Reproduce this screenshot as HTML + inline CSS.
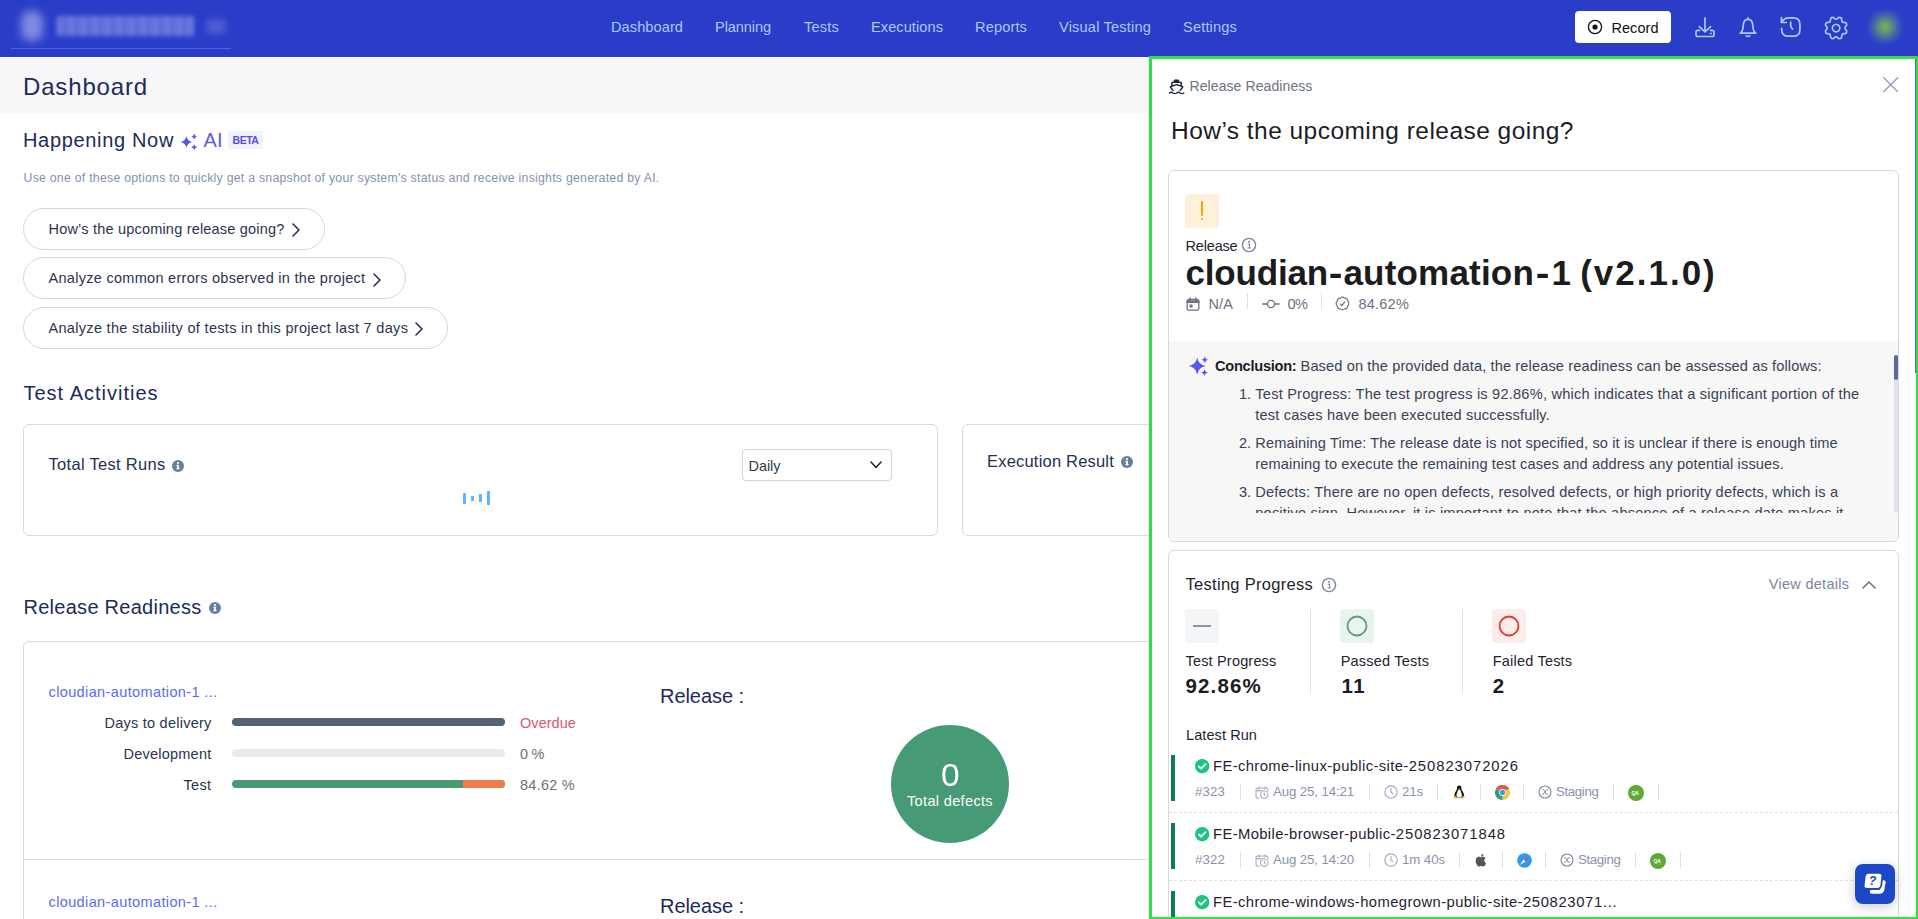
<!DOCTYPE html>
<html lang="en"><head>
<meta charset="utf-8">
<title>Dashboard</title>
<style>
*{box-sizing:border-box;margin:0;padding:0}
html,body{width:1918px;height:919px;overflow:hidden;background:#fff}
body{font-family:"Liberation Sans",sans-serif;color:#1d2a5b;position:relative;font-size:14px}
.abs{position:absolute}
.t{position:absolute;white-space:nowrap;line-height:20px;height:20px}
svg{position:absolute;overflow:visible}
/* header */
#hdr{position:absolute;left:0;top:0;width:1918px;height:57px;background:#2a3dc8}
#hdr .nav{color:#a9c9fa;font-size:14.600px}
#sub{position:absolute;left:0;top:57px;width:1918px;height:60px;background:#f7f7fa}
#main{position:absolute;left:0;top:113px;width:1160px;height:806px;background:#fff;border-top-left-radius:2px}
.h2{font-size:20px;color:#1d2a5b;line-height:28px;height:28px}
.pill{position:absolute;left:23px;height:42px;border:1px solid #d4d7df;border-radius:21px;background:#fff}
.card{position:absolute;border:1px solid #d6d9e3;border-radius:6px;background:#fff}
.lbl{font-size:14.5px;color:#2b3350}
.bar{position:absolute;left:232px;width:273px;height:8px;border-radius:4px;overflow:hidden}
/* panel */
#panel{position:absolute;left:1149px;top:56px;width:770px;height:864px;border:3px solid #33de42;background:#fff;overflow:hidden}
#pin{position:absolute;left:-1152px;top:-59px;width:1918px;height:919px}
.g{color:#6b7280}
.m{font-size:13.300px;color:#8b93a7}
.v{font-size:20.500px;font-weight:700;color:#1c1c1e;line-height:24px;height:24px}
.cl{position:absolute;white-space:nowrap;font-size:14.600px;line-height:21px;color:#3a4152}
.cl b{font-weight:700}
</style>
</head>
<body>
<div id="hdr">
  <!-- blurred project selector -->
  <div class="abs" style="left:21px;top:11px;width:22px;height:30px;border-radius:9px;background:#8e98e6;filter:blur(4px);opacity:.85"></div>
  <div class="abs" style="left:57px;top:15.500px;width:137px;height:20px;border-radius:3px;background:repeating-linear-gradient(90deg,#8d97ec 0 4px,#5865d6 4px 7px,#7b86e4 7px 10px,#4f5cd2 10px 12px);filter:blur(2.500px);opacity:.85"></div>
  <div class="abs" style="left:206px;top:19px;width:20px;height:15px;border-radius:4px;background:#5462d8;filter:blur(3px);opacity:.85"></div>
  <div class="abs" style="left:11px;top:47.500px;width:220px;height:1px;background:#5261d6"></div>
  <span class="t nav" style="left: 611px; top: 17px; letter-spacing: 0.07px;">Dashboard</span>
  <span class="t nav" style="left: 715px; top: 17px; letter-spacing: -0.1px;">Planning</span>
  <span class="t nav" style="left: 804px; top: 17px; letter-spacing: 0.19px;">Tests</span>
  <span class="t nav" style="left: 871px; top: 17px; letter-spacing: 0.06px;">Executions</span>
  <span class="t nav" style="left: 975px; top: 17px; letter-spacing: 0.13px;">Reports</span>
  <span class="t nav" style="left: 1059px; top: 17px; letter-spacing: 0.18px;">Visual Testing</span>
  <span class="t nav" style="left: 1183px; top: 17px; letter-spacing: 0.16px;">Settings</span>
  <div class="abs" style="left:1575px;top:11px;width:96px;height:32px;background:#fff;border-radius:4px"></div>
  <svg style="left:1587px;top:19px" width="16" height="16" viewBox="0 0 16 16"><circle cx="8" cy="8" r="6.6" fill="none" stroke="#111" stroke-width="1.3"></circle><circle cx="8" cy="8" r="2.600" fill="#111"></circle></svg>
  <span class="t" style="left: 1611.5px; top: 18px; color: rgb(17, 17, 17); font-size: 14.5px; letter-spacing: 0.04px;">Record</span>
  <!-- download -->
  <svg style="left:1695px;top:17px" width="20" height="21" viewBox="0 0 20 21" fill="none" stroke="#a8cbfa" stroke-width="1.700" stroke-linecap="round" stroke-linejoin="round"><path d="M10 .9v13.600M4.400 9.600l5.600 5.400 5.600-5.400"></path><path d="M4.500 13.300H2.700c-1 0-1.700.7-1.700 1.700v2.800c0 1 .7 1.700 1.700 1.700h14.600c1 0 1.700-.7 1.700-1.700V15c0-1-.7-1.700-1.700-1.700h-1.800"></path><path d="M15.300 16.400h1.100" stroke-width="1.500"></path></svg>
  <!-- bell -->
  <svg style="left:1738px;top:17px" width="20" height="21" viewBox="0 0 20 21" fill="none" stroke="#a8cbfa" stroke-width="1.700" stroke-linecap="round" stroke-linejoin="round"><path d="M10 2.300C7.400 2.300 5.700 4.300 5.400 7.200L4.700 12.300C4.500 13.800 3.700 14.900 2.300 16.100H17.700C16.300 14.900 15.500 13.800 15.300 12.300L14.600 7.200C14.300 4.300 12.600 2.300 10 2.300zM10 .9v1.400"></path><path d="M8.200 18.900q1.800 1.300 3.600 0" stroke-width="1.600"></path></svg>
  <!-- history -->
  <svg style="left:1780px;top:16px" width="21" height="22" viewBox="0 0 21 22" fill="none" stroke="#a8cbfa" stroke-width="1.700" stroke-linecap="round" stroke-linejoin="round"><path d="M1.400 1.600V6.500H6.300"></path><path d="M2 6C3.400 3.300 5.700 1.900 8.500 1.900H13.300C17.500 1.900 19.900 4.300 19.900 8.400V13.700C19.900 17.800 17.500 20.200 13.300 20.200H8.300C4.100 20.200 1.700 17.800 1.700 13.700V12.300"></path><path d="M10.700 6.100v4.300l1.800 2.600"></path></svg>
  <!-- gear -->
  <svg style="left:1821.400px;top:12.900px" width="30.200" height="30.200" viewBox="0 0 24 24" fill="none" stroke="#a8cbfa" stroke-width="1.330" stroke-linecap="round" stroke-linejoin="round"><g transform="rotate(22.500 12 12)"><circle cx="12" cy="12" r="2.950"></circle><path d="M10.325 4.317c.426-1.756 2.924-1.756 3.350 0a1.724 1.724 0 0 0 2.573 1.066c1.543-.94 3.310.826 2.370 2.370a1.724 1.724 0 0 0 1.065 2.572c1.756.426 1.756 2.924 0 3.350a1.724 1.724 0 0 0-1.066 2.573c.94 1.543-.826 3.310-2.370 2.370a1.724 1.724 0 0 0-2.572 1.065c-.426 1.756-2.924 1.756-3.350 0a1.724 1.724 0 0 0-2.573-1.066c-1.543.94-3.310-.826-2.370-2.370a1.724 1.724 0 0 0-1.065-2.572c-1.756-.426-1.756-2.924 0-3.350a1.724 1.724 0 0 0 1.066-2.573c-.94-1.543.826-3.310 2.370-2.370 1 .608 2.296.070 2.572-1.065z"></path></g></svg>
  <!-- avatar blurred -->
  <div class="abs" style="left:1865px;top:6px;width:41px;height:41px;background:radial-gradient(circle closest-side at 49% 51%,#70b04f 0,#6ba760 14%,#5a8c82 34%,#4a6fa0 52%,#3b58b6 70%,#3046c2 85%,#2a3dc8 100%)"></div>
</div>
<div id="sub">
  <span class="t" style="left: 23px; top: 15px; font-size: 24px; line-height: 30px; height: 30px; color: rgb(29, 42, 91); letter-spacing: 0.84px;">Dashboard</span>
</div>
<div id="main">
 <div class="abs" style="left:0;top:-113px;width:1160px;height:919px">
  <span class="t h2" style="left: 23px; top: 126px; letter-spacing: 0.67px;">Happening Now</span>
  <svg style="left:180px;top:133px" width="18" height="18" viewBox="0 0 18 18" fill="#5956e9"><path d="M6.4 3.1Q7.23 8.17 12.3 9Q7.23 9.83 6.4 14.9Q5.57 9.83 0.5 9Q5.57 8.17 6.4 3.1z"></path><path d="M14.2 0.5Q14.62 3.08 17.2 3.5Q14.62 3.92 14.2 6.5Q13.78 3.92 11.2 3.5Q13.78 3.08 14.2 0.5z"></path><path d="M14.2 11.2Q14.62 13.78 17.2 14.2Q14.62 14.62 14.2 17.2Q13.78 14.62 11.2 14.2Q13.78 13.78 14.2 11.2z"></path></svg>
  <span class="t h2" style="left: 203.5px; top: 126px; color: rgb(102, 88, 230); letter-spacing: 0.05px;">AI</span>
  <div class="abs" style="left:228px;top:131px;width:35px;height:18px;background:#f1f2f9;border-radius:2px"></div>
  <span class="t" style="left: 232.5px; top: 130px; font-size: 10.5px; font-weight: 700; color: rgb(90, 79, 216); letter-spacing: -0.45px;">BETA</span>
  <span class="t" style="left: 23.5px; top: 168px; font-size: 12.3px; color: rgb(133, 145, 179); letter-spacing: 0.25px;">Use one of these options to quickly get a snapshot of your system's status and receive insights generated by AI.</span>

  <div class="pill" style="top:208px;width:302px"></div>
  <span class="t lbl" style="left: 48.5px; top: 219px; letter-spacing: 0.2px;">How’s the upcoming release going?</span>
  <svg style="left:292px;top:223px" width="8" height="14" viewBox="0 0 8 14" fill="none" stroke="#2b3350" stroke-width="1.600" stroke-linecap="round" stroke-linejoin="round"><path d="M1 1l6 6-6 6"></path></svg>
  <div class="pill" style="top:257px;width:383px"></div>
  <span class="t lbl" style="left: 48.5px; top: 268px; letter-spacing: 0.29px;">Analyze common errors observed in the project</span>
  <svg style="left:373px;top:272.5px" width="8" height="14" viewBox="0 0 8 14" fill="none" stroke="#2b3350" stroke-width="1.600" stroke-linecap="round" stroke-linejoin="round"><path d="M1 1l6 6-6 6"></path></svg>
  <div class="pill" style="top:307px;width:425px"></div>
  <span class="t lbl" style="left: 48.5px; top: 318px; letter-spacing: 0.31px;">Analyze the stability of tests in this project last 7 days</span>
  <svg style="left:415px;top:322px" width="8" height="14" viewBox="0 0 8 14" fill="none" stroke="#2b3350" stroke-width="1.600" stroke-linecap="round" stroke-linejoin="round"><path d="M1 1l6 6-6 6"></path></svg>

  <span class="t h2" style="left: 23.5px; top: 379px; letter-spacing: 1px;">Test Activities</span>
  <div class="card" style="left:23px;top:424px;width:915px;height:112px"></div>
  <span class="t" style="left: 48.5px; top: 454px; font-size: 16.5px; color: rgb(37, 48, 79); letter-spacing: 0.3px;">Total Test Runs</span>
  <svg style="left:172px;top:459.5px" width="12" height="12" viewBox="0 0 12 12"><circle cx="6" cy="6" r="6" fill="#64809f"></circle><rect x="5.100" y="4.900" width="1.800" height="4.300" fill="#fff"></rect><rect x="4.400" y="4.900" width="1.800" height="1" fill="#fff"></rect><rect x="4.300" y="8.300" width="3.400" height=".9" fill="#fff"></rect><circle cx="6" cy="3.100" r="1.050" fill="#fff"></circle></svg>
  <div class="abs" style="left:463px;top:493px;width:3px;height:11px;background:#64b5f6"></div>
  <div class="abs" style="left:471px;top:496px;width:3px;height:5px;background:#64b5f6"></div>
  <div class="abs" style="left:479px;top:494px;width:3px;height:8px;background:#64b5f6"></div>
  <div class="abs" style="left:487px;top:491px;width:3px;height:14px;background:#64b5f6"></div>
  <div class="abs" style="left:742px;top:449px;width:150px;height:32px;border:1px solid #cfd3dc;border-radius:4px;background:#fff"></div>
  <span class="t" style="left: 748.5px; top: 456px; font-size: 14.5px; color: rgb(51, 58, 77); letter-spacing: -0.05px;">Daily</span>
  <svg style="left:870px;top:461px" width="12" height="8" viewBox="0 0 12 8" fill="none" stroke="#222" stroke-width="1.500" stroke-linecap="round" stroke-linejoin="round"><path d="M1 1l5 5.500L11 1"></path></svg>
  <div class="card" style="left:962px;top:424px;width:915px;height:112px"></div>
  <span class="t" style="left: 987px; top: 451px; font-size: 16.5px; color: rgb(37, 48, 79); letter-spacing: 0.2px;">Execution Result</span>
  <svg style="left:1121px;top:456px" width="12" height="12" viewBox="0 0 12 12"><circle cx="6" cy="6" r="6" fill="#64809f"></circle><rect x="5.100" y="4.900" width="1.800" height="4.300" fill="#fff"></rect><rect x="4.400" y="4.900" width="1.800" height="1" fill="#fff"></rect><rect x="4.300" y="8.300" width="3.400" height=".9" fill="#fff"></rect><circle cx="6" cy="3.100" r="1.050" fill="#fff"></circle></svg>

  <span class="t h2" style="left: 23.5px; top: 593px; letter-spacing: 0.27px;">Release Readiness</span>
  <svg style="left:209px;top:602px" width="12" height="12" viewBox="0 0 12 12"><circle cx="6" cy="6" r="6" fill="#64809f"></circle><rect x="5.100" y="4.900" width="1.800" height="4.300" fill="#fff"></rect><rect x="4.400" y="4.900" width="1.800" height="1" fill="#fff"></rect><rect x="4.300" y="8.300" width="3.400" height=".9" fill="#fff"></rect><circle cx="6" cy="3.100" r="1.050" fill="#fff"></circle></svg>
  <div class="card" style="left:23px;top:641px;width:1854px;height:600px"></div>
  <div class="abs" style="left:24px;top:859px;width:1852px;height:1px;background:#dcdfe7"></div>

  <span class="t" style="left: 48.5px; top: 682px; font-size: 14.5px; color: rgb(91, 108, 240); letter-spacing: 0.38px;">cloudian-automation-1 ...</span>
  <span class="t lbl" style="left: 104.5px; top: 713px; letter-spacing: 0.24px;">Days to delivery</span>
  <div class="bar" style="top:718px;background:#546179"></div>
  <span class="t" style="left: 520px; top: 713px; font-size: 14.5px; color: rgb(224, 86, 111); letter-spacing: 0.05px;">Overdue</span>
  <span class="t lbl" style="left: 123.5px; top: 744px; letter-spacing: 0.23px;">Development</span>
  <div class="bar" style="top:749px;background:#e9ecef"></div>
  <span class="t g" style="left: 520px; top: 744px; font-size: 14.5px; letter-spacing: -0.33px;">0 %</span>
  <span class="t lbl" style="left: 183.5px; top: 775px; letter-spacing: 0.35px;">Test</span>
  <div class="bar" style="top:780px;background:#469a76"><div class="abs" style="left:231px;top:0;width:42px;height:8px;background:#ee7d47"></div></div>
  <span class="t g" style="left: 520px; top: 775px; font-size: 14.5px; letter-spacing: 0.25px;">84.62 %</span>

  <span class="t h2" style="left: 660px; top: 682px; letter-spacing: -0.06px;">Release :</span>
  <div class="abs" style="left:891px;top:725px;width:118px;height:118px;border-radius:50%;background:#469a76"></div>
  <span class="t" style="left:940.500px;top:759.500px;font-size:30.500px;line-height:30px;height:30px;color:#fff;transform:scaleX(1.100);transform-origin:0 0">0</span>
  <span class="t" style="left: 907px; top: 791px; font-size: 14.5px; color: rgb(255, 255, 255); letter-spacing: 0.35px;">Total defects</span>

  <span class="t" style="left: 48.5px; top: 892px; font-size: 14.5px; color: rgb(91, 108, 240); letter-spacing: 0.38px;">cloudian-automation-1 ...</span>
  <span class="t h2" style="left: 660px; top: 892px; letter-spacing: -0.06px;">Release :</span>
 </div>
</div>
<div id="panel"><div id="pin">
  <svg style="left:1168px;top:78px" width="18" height="17" viewBox="0 0 18 17" fill="none" stroke="#1a2438" stroke-width="1.500" stroke-linecap="round" stroke-linejoin="round"><rect x="6.600" y="2" width="4" height="1.600" fill="#1a2438" stroke-width="1"></rect><path d="M3.900 8.300V5.300c0-.6.400-1 1-1h7.400c.6 0 1 .4 1 1v3"></path><path d="M5 12.400L2.700 9.500c-.3-.4-.2-.9.300-1.100l5.600-1.800 5.600 1.800c.5.200.6.700.3 1.100l-2.300 2.900"></path><path d="M1.400 15c1.200-1 2.400-1 3.600 0 1.200.9 2.400.9 3.600 0 1.200-1 2.400-1 3.600 0 1.200.9 2.400.9 3.600 0" stroke-width="1.300"></path></svg>
  <span class="t g" style="left: 1189.5px; top: 76px; font-size: 14px; letter-spacing: 0.09px;">Release Readiness</span>
  <svg style="left:1883.200px;top:77.300px" width="15.400" height="15.400" viewBox="0 0 14 14" fill="none" stroke="#8c97b8" stroke-width="1.250" stroke-linecap="round"><path d="M.7.700l12.600 12.600M13.300.7L.7 13.300"></path></svg>
  <span class="t" style="left: 1171px; top: 116px; font-size: 24.5px; line-height: 30px; height: 30px; color: rgb(28, 28, 40); letter-spacing: 0.46px;">How’s the upcoming release going?</span>
  <div class="card" style="left:1168px;top:170px;width:731px;height:372px;border-color:#d7d9e1;overflow:hidden"><div class="abs" style="left:0;top:170px;width:731px;height:202px;background:#f7f7f8"></div></div>
  <div class="abs" style="left:1185px;top:194px;width:34px;height:34px;border-radius:4px;background:#fef0d9"></div>
  <div class="abs" style="left:1201px;top:201px;width:1.600px;height:15px;background:#f8a700;border-radius:1px"></div><div class="abs" style="left:1200.800px;top:217.800px;width:2px;height:2px;background:#f8a700;border-radius:1px"></div>
  <span class="t" style="left: 1185.5px; top: 236px; font-size: 14.5px; color: rgb(31, 35, 48); letter-spacing: -0.17px;">Release</span>
  <svg style="left:1241.0px;top:237.4px" width="16" height="16" viewBox="0 0 16 16"><circle cx="8" cy="8" r="6.6" fill="none" stroke="#7a8499" stroke-width="1.400"></circle><circle cx="8" cy="5" r=".95" fill="#7a8499"></circle><path d="M6.700 7.200h1.800v3.700M6.500 11h3.200" fill="none" stroke="#7a8499" stroke-width="1.100"></path></svg>
  <span class="t" style="left:1185.500px;top:251px;font-size:35px;line-height:44px;height:44px;font-weight:700;color:#1c1c1e"><span style="letter-spacing: -0.18px;">cloudian</span><span style="display:inline-block;width:15.500px;text-align:center;transform:scaleX(1.180)">-</span><span style="letter-spacing: 0.19px;">automation</span><span style="display:inline-block;width:17.500px;text-align:center;transform:scaleX(1.180)">-</span><span style="letter-spacing: -2.47px;">1</span><span style="letter-spacing: 1.99px;"> (v2.1.0)</span></span>
  <svg style="left:1186.300px;top:297px" width="14" height="14" viewBox="0 0 14 14" fill="none" stroke="#6b7280" stroke-width="1.300" stroke-linecap="round" stroke-linejoin="round"><rect x="1.200" y="2.400" width="11.600" height="10.800" rx="1.500"></rect><path d="M1.200 3.900h11.600v1.400H1.200z" fill="#6b7280"></path><path d="M4.200.8v2.400M9.800.8v2.400"></path><rect x="3.500" y="7.500" width="3" height="3" fill="#6b7280" stroke="none"></rect></svg>
  <span class="t g" style="left: 1208.5px; top: 294px; font-size: 14.5px; letter-spacing: 0.11px;">N/A</span>
  <div class="abs" style="left:1247px;top:293px;width:1px;height:16px;background:#dcdfe6"></div>
  <svg style="left:1262px;top:299px" width="18" height="10" viewBox="0 0 18 10" fill="none" stroke="#6b7280" stroke-width="1.300" stroke-linecap="round"><circle cx="9" cy="5" r="3.600"></circle><path d="M.8 5h4.400M12.800 5h4.400"></path></svg>
  <span class="t g" style="left: 1287.5px; top: 294px; font-size: 14.5px; letter-spacing: -0.48px;">0%</span>
  <div class="abs" style="left:1321px;top:293px;width:1px;height:16px;background:#dcdfe6"></div>
  <svg style="left:1334.300px;top:295.300px" width="17" height="17" viewBox="0 0 24 24" fill="none" stroke="#6b7280" stroke-width="1.700" stroke-linecap="round" stroke-linejoin="round"><path d="M9 12.750L11.250 15 15 9.750M21 12c0 1.268-.63 2.390-1.593 3.068a3.745 3.745 0 0 1-1.043 3.296 3.745 3.745 0 0 1-3.296 1.043A3.745 3.745 0 0 1 12 21c-1.268 0-2.390-.63-3.068-1.593a3.746 3.746 0 0 1-3.296-1.043 3.745 3.745 0 0 1-1.043-3.296A3.745 3.745 0 0 1 3 12c0-1.268.63-2.390 1.593-3.068a3.745 3.745 0 0 1 1.043-3.296 3.746 3.746 0 0 1 3.296-1.043A3.746 3.746 0 0 1 12 3c1.268 0 2.390.63 3.068 1.593a3.746 3.746 0 0 1 3.296 1.043 3.746 3.746 0 0 1 1.043 3.296A3.745 3.745 0 0 1 21 12z"></path></svg>
  <span class="t g" style="left: 1358.5px; top: 294px; font-size: 14.5px; letter-spacing: 0.22px;">84.62%</span>
  <svg style="left:1188px;top:355px" width="22" height="22" viewBox="0 0 22 22" fill="#5956e9"><path d="M9.2 2.5Q10.4 9.9 17.8 11.1Q10.4 12.3 9.2 19.7Q8 12.3 0.6 11.1Q8 9.9 9.2 2.5z"></path><path d="M16.8 1.4Q17.28 4.32 20.2 4.8Q17.28 5.28 16.8 8.2Q16.32 5.28 13.4 4.8Q16.32 4.32 16.8 1.4z"></path><path d="M16.5 13.9Q17 17 20.1 17.5Q17 18 16.5 21.1Q16 18 12.9 17.5Q16 17 16.5 13.9z"></path></svg>
  <div class="abs" style="left:1215px;top:355px;width:676px;height:158px;overflow:hidden">
   <p class="cl" style="left:0;top:.7px"><b style="color: rgb(28, 28, 40); letter-spacing: -0.26px;">Conclusion:</b> <span style="letter-spacing: 0.12px;">Based on the provided data, the release readiness can be assessed as follows:</span></p>
   <ol style="list-style:none">
    <li><span class="cl" style="left: 24px; top: 28.5px; letter-spacing: -0.09px;">1.</span><span class="cl" style="left: 40.3px; top: 28.5px; letter-spacing: 0.21px;">Test Progress: The test progress is 92.86%, which indicates that a significant portion of the</span><span class="cl" style="left: 40.3px; top: 49.5px; letter-spacing: 0.18px;">test cases have been executed successfully.</span></li>
    <li><span class="cl" style="left: 24px; top: 77.5px; letter-spacing: -0.09px;">2.</span><span class="cl" style="left: 40.3px; top: 77.5px; letter-spacing: 0.11px;">Remaining Time: The release date is not specified, so it is unclear if there is enough time</span><span class="cl" style="left: 40.3px; top: 98.5px; letter-spacing: 0.13px;">remaining to execute the remaining test cases and address any potential issues.</span></li>
    <li><span class="cl" style="left: 24px; top: 126.5px; letter-spacing: -0.09px;">3.</span><span class="cl" style="left: 40.3px; top: 126.5px; letter-spacing: 0.18px;">Defects: There are no open defects, resolved defects, or high priority defects, which is a</span><span class="cl" style="left: 40.3px; top: 147.5px; letter-spacing: 0.18px;">positive sign. However, it is important to note that the absence of a release date makes it</span></li>
   </ol>
  </div>
  <div class="abs" style="left:1915px;top:59px;width:1px;height:314px;background:#6068b4"></div>
  <div class="abs" style="left:1894px;top:355px;width:4px;height:158px;background:#dfe2ed;border-radius:2px"></div>
  <div class="abs" style="left:1894px;top:355px;width:4px;height:25px;background:#5a699c;border-radius:2px"></div>
  <div class="card" style="left:1168px;top:550px;width:731px;height:421px;border-color:#d7d9e1"></div>
  <span class="t" style="left: 1185.5px; top: 574.4px; font-size: 16.5px; color: rgb(31, 35, 48); letter-spacing: 0.29px;">Testing Progress</span>
  <svg style="left:1320.8px;top:577.1px" width="16" height="16" viewBox="0 0 16 16"><circle cx="8" cy="8" r="6.6" fill="none" stroke="#7a8499" stroke-width="1.400"></circle><circle cx="8" cy="5" r=".95" fill="#7a8499"></circle><path d="M6.700 7.200h1.800v3.700M6.500 11h3.200" fill="none" stroke="#7a8499" stroke-width="1.100"></path></svg>
  <span class="t" style="left: 1768.8px; top: 574px; font-size: 14.5px; color: rgb(124, 134, 159); letter-spacing: 0.28px;">View details</span>
  <svg style="left:1862px;top:580.500px" width="14" height="8" viewBox="0 0 14 8" fill="none" stroke="#6f788a" stroke-width="1.600" stroke-linecap="round" stroke-linejoin="round"><path d="M1 7l6-6 6 6"></path></svg>
  <div class="abs" style="left:1185px;top:609px;width:34px;height:34px;border-radius:4px;background:#f4f5f7"></div><div class="abs" style="left:1192.500px;top:625px;width:18px;height:1.500px;background:#8c93a6"></div>
  <div class="abs" style="left:1340px;top:609px;width:34px;height:34px;border-radius:4px;background:#e9f5ec"></div><svg style="left:1345px;top:614px" width="24" height="24" viewBox="0 0 24 24"><circle cx="12" cy="12" r="9.500" fill="none" stroke="#5a9e72" stroke-width="1.800"></circle></svg>
  <div class="abs" style="left:1492px;top:609px;width:34px;height:34px;border-radius:4px;background:#fdecec"></div><svg style="left:1497px;top:614px" width="24" height="24" viewBox="0 0 24 24"><circle cx="12" cy="12" r="9.500" fill="none" stroke="#e8352e" stroke-width="1.800"></circle></svg>
  <div class="abs" style="left:1310px;top:609px;width:1px;height:84px;background:#dcdfe6"></div>
  <div class="abs" style="left:1462px;top:609px;width:1px;height:84px;background:#dcdfe6"></div>
  <span class="t" style="left: 1185.5px; top: 651px; font-size: 14.5px; color: rgb(31, 35, 48); letter-spacing: 0.18px;">Test Progress</span>
  <span class="t" style="left: 1340.7px; top: 651px; font-size: 14.5px; color: rgb(31, 35, 48); letter-spacing: 0.21px;">Passed Tests</span>
  <span class="t" style="left: 1492.8px; top: 651px; font-size: 14.5px; color: rgb(31, 35, 48); letter-spacing: 0.2px;">Failed Tests</span>
  <span class="t v" style="left: 1185.5px; top: 673.5px; letter-spacing: 1.16px;">92.86%</span>
  <span class="t v" style="left: 1341.5px; top: 673.5px; letter-spacing: 1.41px;">11</span>
  <span class="t v" style="left: 1492.8px; top: 673.5px; letter-spacing: 1.59px;">2</span>
  <span class="t" style="left: 1186px; top: 725px; font-size: 14.5px; color: rgb(31, 35, 48); letter-spacing: 0.09px;">Latest Run</span>
  <div class="abs" style="left:1171px;top:755px;width:4px;height:46px;background:#0c7b57"></div>
  <svg style="left:1194.6px;top:759.1px" width="14.400" height="14.400" viewBox="0 0 16 16"><circle cx="8" cy="8" r="8" fill="#1cc47f"></circle><path d="M4.300 8.300l2.500 2.500 4.900-5" fill="none" stroke="#fff" stroke-width="2" stroke-linecap="round" stroke-linejoin="round"></path></svg>
  <span class="t" style="left:1213px;top:756.3px;font-size:14.800px;color:#1f2330"><span style="letter-spacing: 0.38px;">FE-chrome-linux-public-site-</span><span style="letter-spacing: 0.96px;">250823072026</span></span>
  <span class="t m" style="left: 1195px; top: 782.2px; letter-spacing: 0.1px;">#323</span>
  <div class="abs" style="left:1240px;top:784px;width:1px;height:16px;background:#dcdfe6"></div>
  <svg style="left:1255px;top:785.5px" width="14" height="13" viewBox="0 0 14 13" fill="none" stroke="#a2aabc" stroke-width="1.050" stroke-linecap="round" stroke-linejoin="round"><path d="M4.200 12H2.600C1.700 12 1 11.300 1 10.400V3.600C1 2.700 1.700 2 2.600 2h8.800c.9 0 1.600.7 1.600 1.600v1.200M1 4.600h5M4 .7v2.200M10 .7v2.200"></path><circle cx="9.300" cy="8.600" r="3.800"></circle><path d="M9.300 6.700v2.100l1.100.8"></path></svg>
  <span class="t m" style="left: 1273px; top: 782.2px; letter-spacing: -0.14px;">Aug 25, 14:21</span>
  <div class="abs" style="left:1369px;top:784px;width:1px;height:16px;background:#dcdfe6"></div>
  <svg style="left:1383.8px;top:785.2px" width="14" height="14" viewBox="0 0 14 14" fill="none" stroke="#a2aabc" stroke-width="1.150" stroke-linecap="round" stroke-linejoin="round"><circle cx="7" cy="7" r="6.200"></circle><path d="M7 3.600v3.600l2 1.400"></path></svg>
  <span class="t m" style="left: 1402px; top: 782.2px; letter-spacing: -0.15px;">21s</span>
  <div class="abs" style="left:1437px;top:784px;width:1px;height:16px;background:#dcdfe6"></div>
  <svg style="left:1452.8px;top:785.4px" width="12.400" height="14.200" viewBox="0 0 14 16"><path d="M7 .6c-1.700 0-2.500 1.300-2.500 3 0 1.300-.4 2.200-1.300 3.500C2.300 8.500 1.600 10 1.600 11.500c0 .8.200 1.400.6 1.900l2 .8h5.600l2-.8c.4-.5.600-1.100.6-1.900 0-1.500-.7-3-1.600-4.400-.9-1.300-1.300-2.200-1.300-3.500 0-1.700-.8-3-2.500-3z" fill="#111"></path><path d="M7 5.200c-1 0-1.600 1-2 2.300-.5 1.500-1.100 2.500-1.100 4 0 1.400 1.100 2.300 3.100 2.300s3.100-.9 3.100-2.300c0-1.500-.6-2.500-1.100-4-.4-1.300-1-2.300-2-2.300z" fill="#fff"></path><path d="M5.800 4.500l1.200.8 1.200-.8-1.200-.5z" fill="#f5a623"></path><path d="M.8 13.600c0-.7.800-1.300 1.800-1.500l1.900 1.700c.4.500.2 1.300-.6 1.500-1 .2-3.100-.5-3.100-1.700zM13.200 13.600c0-.7-.8-1.300-1.800-1.500l-1.900 1.700c-.4.500-.2 1.300.6 1.500 1 .2 3.100-.5 3.100-1.700z" fill="#f5a623"></path></svg>
  <div class="abs" style="left:1480px;top:784px;width:1px;height:16px;background:#dcdfe6"></div>
  <svg style="left:1494.5px;top:784.7px" width="15" height="15" viewBox="0 0 48 48"><path d="M24 24L3.200 12A24 24 0 0 1 44.800 12z" fill="#df5a4b"></path><path d="M24 24L44.800 12A24 24 0 0 1 24 48z" fill="#efc84e"></path><path d="M24 24L24 48A24 24 0 0 1 3.200 12z" fill="#2f9f7e"></path><path d="M3.200 12A24 24 0 0 1 44.800 12H24z" fill="#df5a4b"></path><circle cx="24" cy="24" r="11" fill="#fff"></circle><circle cx="24" cy="24" r="8.600" fill="#449fd8"></circle></svg>
  <div class="abs" style="left:1523px;top:784px;width:1px;height:16px;background:#dcdfe6"></div>
  <svg style="left:1538.0px;top:785.2px" width="14" height="14" viewBox="0 0 14 14" fill="none" stroke="#7f8799" stroke-width="1.100" stroke-linecap="round"><circle cx="7" cy="7" r="6"></circle><path d="M4.600 4.900c1.400-.6 2.200.2 2.500 2.100.3 1.900 1.100 2.700 2.400 2.100M9.600 4.700c-1.300.1-2 1-2.600 2.300-.6 1.300-1.300 2.200-2.600 2.300" stroke-width="1"></path></svg>
  <span class="t m" style="left: 1556px; top: 782.2px; letter-spacing: -0.37px;">Staging</span>
  <div class="abs" style="left:1613px;top:784px;width:1px;height:16px;background:#dcdfe6"></div>
  <div class="abs" style="left:1628.0px;top:784.9px;width:16px;height:16px;border-radius:50%;background:#5fa934"></div><span class="t" style="left:1631.5px;top:788.9px;font-size:5px;line-height:8px;height:8px;font-weight:700;color:#fff;letter-spacing:-.2px">QA</span>
  <div class="abs" style="left:1658px;top:784px;width:1px;height:16px;background:#dcdfe6"></div>
  <div class="abs" style="left:1169px;top:812px;width:729px;height:0;border-top:1px dashed #dfe1e7"></div>
  <div class="abs" style="left:1171px;top:823px;width:4px;height:46px;background:#0c7b57"></div>
  <svg style="left:1194.6px;top:827.1px" width="14.400" height="14.400" viewBox="0 0 16 16"><circle cx="8" cy="8" r="8" fill="#1cc47f"></circle><path d="M4.300 8.300l2.500 2.500 4.900-5" fill="none" stroke="#fff" stroke-width="2" stroke-linecap="round" stroke-linejoin="round"></path></svg>
  <span class="t" style="left:1213px;top:824.3px;font-size:14.800px;color:#1f2330"><span style="letter-spacing: 0.37px;">FE-Mobile-browser-public-</span><span style="letter-spacing: 0.96px;">250823071848</span></span>
  <span class="t m" style="left: 1195px; top: 850.2px; letter-spacing: 0.1px;">#322</span>
  <div class="abs" style="left:1240px;top:852px;width:1px;height:16px;background:#dcdfe6"></div>
  <svg style="left:1255px;top:853.5px" width="14" height="13" viewBox="0 0 14 13" fill="none" stroke="#a2aabc" stroke-width="1.050" stroke-linecap="round" stroke-linejoin="round"><path d="M4.200 12H2.600C1.700 12 1 11.300 1 10.400V3.600C1 2.700 1.700 2 2.600 2h8.800c.9 0 1.600.7 1.600 1.600v1.200M1 4.600h5M4 .7v2.200M10 .7v2.200"></path><circle cx="9.300" cy="8.600" r="3.800"></circle><path d="M9.300 6.700v2.100l1.100.8"></path></svg>
  <span class="t m" style="left: 1273px; top: 850.2px; letter-spacing: -0.14px;">Aug 25, 14:20</span>
  <div class="abs" style="left:1369px;top:852px;width:1px;height:16px;background:#dcdfe6"></div>
  <svg style="left:1383.8px;top:853.2px" width="14" height="14" viewBox="0 0 14 14" fill="none" stroke="#a2aabc" stroke-width="1.150" stroke-linecap="round" stroke-linejoin="round"><circle cx="7" cy="7" r="6.200"></circle><path d="M7 3.600v3.600l2 1.400"></path></svg>
  <span class="t m" style="left: 1402px; top: 850.2px; letter-spacing: -0.1px;">1m 40s</span>
  <div class="abs" style="left:1459px;top:852px;width:1px;height:16px;background:#dcdfe6"></div>
  <svg style="left:1474.0px;top:851.7px" width="14" height="16" viewBox="0 0 14 16" fill="#555"><path d="M10.300 8.500c0-1.600 1.300-2.400 1.400-2.400-.8-1.100-1.900-1.300-2.300-1.300-1-.1-1.900.6-2.400.6s-1.300-.6-2.100-.6c-1.100 0-2.100.6-2.700 1.600-1.100 2-.3 4.900.8 6.500.5.800 1.200 1.700 2 1.600.8 0 1.100-.5 2.100-.5s1.200.5 2.100.5 1.400-.8 2-1.600c.6-.9.900-1.800.9-1.800s-1.800-.7-1.800-2.600zM8.800 3.800c.4-.5.700-1.300.6-2-.6 0-1.400.4-1.800.9-.4.500-.8 1.200-.7 2 .7 0 1.400-.4 1.900-.9z"></path></svg>
  <div class="abs" style="left:1502px;top:852px;width:1px;height:16px;background:#dcdfe6"></div>
  <svg style="left:1516.5px;top:852.7px" width="15" height="15" viewBox="0 0 30 30"><circle cx="15" cy="15" r="14.500" fill="#2d9bf0"></circle><path d="M24 6L13 13l4 4z" fill="#f0494e"></path><path d="M6 24l11-7-4-4z" fill="#fff"></path></svg>
  <div class="abs" style="left:1545px;top:852px;width:1px;height:16px;background:#dcdfe6"></div>
  <svg style="left:1560.0px;top:853.2px" width="14" height="14" viewBox="0 0 14 14" fill="none" stroke="#7f8799" stroke-width="1.100" stroke-linecap="round"><circle cx="7" cy="7" r="6"></circle><path d="M4.600 4.900c1.400-.6 2.200.2 2.500 2.100.3 1.900 1.100 2.700 2.400 2.100M9.600 4.700c-1.300.1-2 1-2.600 2.300-.6 1.300-1.300 2.200-2.600 2.300" stroke-width="1"></path></svg>
  <span class="t m" style="left: 1578px; top: 850.2px; letter-spacing: -0.37px;">Staging</span>
  <div class="abs" style="left:1635px;top:852px;width:1px;height:16px;background:#dcdfe6"></div>
  <div class="abs" style="left:1650.0px;top:852.9px;width:16px;height:16px;border-radius:50%;background:#5fa934"></div><span class="t" style="left:1653.5px;top:856.9px;font-size:5px;line-height:8px;height:8px;font-weight:700;color:#fff;letter-spacing:-.2px">QA</span>
  <div class="abs" style="left:1680px;top:852px;width:1px;height:16px;background:#dcdfe6"></div>
  <div class="abs" style="left:1169px;top:880px;width:729px;height:0;border-top:1px dashed #dfe1e7"></div>
  <div class="abs" style="left:1171px;top:891px;width:4px;height:46px;background:#0c7b57"></div>
  <svg style="left:1194.6px;top:895.1px" width="14.400" height="14.400" viewBox="0 0 16 16"><circle cx="8" cy="8" r="8" fill="#1cc47f"></circle><path d="M4.300 8.300l2.500 2.500 4.900-5" fill="none" stroke="#fff" stroke-width="2" stroke-linecap="round" stroke-linejoin="round"></path></svg>
  <span class="t" style="left:1213px;top:892.300px;font-size:14.800px;color:#1f2330"><span style="letter-spacing: 0.41px;">FE-chrome-windows-homegrown-public-site-</span><span style="letter-spacing: 0.65px;">250823071...</span></span>
  <div class="abs" style="left:1855px;top:864px;width:40px;height:40px;border-radius:8px;background:#1c48c8;box-shadow:0 3px 12px rgba(20,30,60,.22)"></div>
  <svg style="left:1855px;top:864px" width="40" height="40" viewBox="0 0 40 40"><path d="M28.600 18.200L27.300 25.400Q26.900 27.800 24.500 27.800L16.800 27.800" fill="none" stroke="#fff" stroke-width="4.100" stroke-linecap="round" stroke-linejoin="round"></path><g transform="translate(18 16.900) skewX(-7)"><rect x="-8.800" y="-8" width="17.600" height="16" rx="3.600" fill="#fff" stroke="#1c48c8" stroke-width="1.800"></rect></g></svg>
  <span class="t" style="left:1868.800px;top:872.800px;font-size:12.500px;line-height:16px;height:16px;font-weight:700;font-style:italic;color:#1c48c8">?</span>
</div></div>


</body></html>
